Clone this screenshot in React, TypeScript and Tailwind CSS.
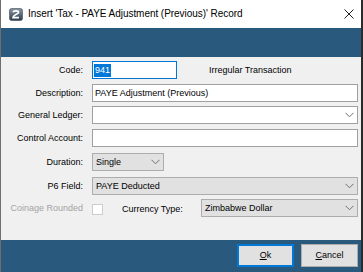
import React from "react";

const Chevron = () => (
  <svg width="9" height="6" viewBox="0 0 9 6" className="shrink-0">
    <path d="M0.5 0.8 L4.5 4.8 L8.5 0.8" fill="none" stroke="#707070" strokeWidth="1" />
  </svg>
);

const Label = ({ children, disabled }: { children: React.ReactNode; disabled?: boolean }) => (
  <div className={`w-[83px] shrink-0 text-right pr-[1px] ${disabled ? "text-[#a3a3a3]" : "text-black"}`}>{children}</div>
);

export default function App() {
  return (
    <div
      className="w-[363px] h-[272px] bg-[#2b2b2b] flex overflow-hidden text-[9px] leading-none"
      style={{ fontFamily: '"Liberation Sans", Arial, sans-serif' }}
    >
      <div className="w-[361px] h-full flex flex-col border-l border-[#6e6e6e]">
        {/* Title bar */}
        <div className="h-[28px] bg-white flex items-center shrink-0">
          <svg width="14" height="13" viewBox="0 0 14 13" className="ml-[8px]">
            <defs>
              <linearGradient id="ig" x1="0" y1="0" x2="0" y2="1">
                <stop offset="0" stopColor="#8a96a3" />
                <stop offset="1" stopColor="#2d3b4b" />
              </linearGradient>
            </defs>
            <rect x="0.5" y="0.5" width="13" height="12" rx="2" fill="url(#ig)" stroke="#3d4a58" strokeWidth="0.6" />
            <path d="M4 4.2 C4.5 2.6 9.5 2.4 9.5 4.4 C9.5 6.2 4.2 6.6 4 9.6 L10 9.6" fill="none" stroke="#ffffff" strokeWidth="1.7" />
          </svg>
          <span className="ml-[5px] text-[10px] text-black tracking-[-0.05px]">Insert 'Tax - PAYE Adjustment (Previous)' Record</span>
          <svg width="10" height="10" viewBox="0 0 10 10" className="ml-auto mr-[7px]">
            <path d="M0.5 0.5 L9.5 9.5 M9.5 0.5 L0.5 9.5" stroke="#222" strokeWidth="1" />
          </svg>
        </div>
        {/* Blue band */}
        <div className="h-[29px] bg-[#295a7e] shrink-0" />
        {/* Form */}
        <div className="h-[183px] bg-[#f0f0f0] shrink-0 flex flex-col pt-[4px] pr-[3px]">
          {/* Code */}
          <div className="flex items-center h-[18px]">
            <Label>Code:</Label>
            <div className="ml-[8px] w-[85px] h-full bg-white border border-[#0078d7] flex items-center pl-[1px]">
              <span className="bg-[#0078d7] text-white px-[1px] py-[2px]">941</span>
            </div>
            <div className="ml-[32px]">Irregular Transaction</div>
          </div>
          {/* Description */}
          <div className="flex items-center h-[18px] mt-[5px]">
            <Label>Description:</Label>
            <div className="ml-[8px] flex-1 h-full bg-white border border-[#a0a0a0] flex items-center pl-[2px]">
              PAYE Adjustment (Previous)
            </div>
          </div>
          {/* General Ledger */}
          <div className="flex items-center h-[18px] mt-[4px]">
            <Label>General Ledger:</Label>
            <div className="ml-[8px] flex-1 h-full bg-white border border-[#a0a0a0] flex items-center justify-end pr-[3px]">
              <Chevron />
            </div>
          </div>
          {/* Control Account */}
          <div className="flex items-center h-[18px] mt-[5px]">
            <Label>Control Account:</Label>
            <div className="ml-[8px] flex-1 h-full bg-white border border-[#a0a0a0]" />
          </div>
          {/* Duration */}
          <div className="flex items-center h-[18px] mt-[6px]">
            <Label>Duration:</Label>
            <div className="ml-[8px] w-[72px] h-full bg-[#e1e1e1] border border-[#adadad] flex items-center pl-[3px] pr-[3px]">
              <span>Single</span>
              <span className="ml-auto"><Chevron /></span>
            </div>
          </div>
          {/* P6 Field */}
          <div className="flex items-center h-[18px] mt-[6px]">
            <Label>P6 Field:</Label>
            <div className="ml-[8px] flex-1 h-full bg-[#e1e1e1] border border-[#adadad] flex items-center pl-[3px] pr-[3px]">
              <span>PAYE Deducted</span>
              <span className="ml-auto"><Chevron /></span>
            </div>
          </div>
          {/* Coinage / Currency */}
          <div className="flex items-center h-[18px] mt-[4px]">
            <Label disabled>Coinage Rounded</Label>
            <div className="ml-[8px] w-[11px] h-[11px] bg-white border border-[#cccccc] mt-[2px]" />
            <div className="ml-[19px] mt-[2px]">Currency Type:</div>
            <div className="ml-auto w-[157px] h-full bg-[#e1e1e1] border border-[#adadad] flex items-center pl-[3px] pr-[3px]">
              <span>Zimbabwe Dollar</span>
              <span className="ml-auto"><Chevron /></span>
            </div>
          </div>
        </div>
        {/* Bottom bar */}
        <div className="flex-1 bg-[#295a7e] flex items-start justify-end pt-[4px] pr-[3px] gap-[7px]">
          <button className="w-[57px] h-[23px] bg-[#e1e1e1] border-2 border-[#0078d7] flex items-center justify-center text-black">
            <span><span className="underline">O</span>k</span>
          </button>
          <button className="w-[57px] h-[23px] bg-[#e1e1e1] border border-[#adadad] flex items-center justify-center text-black">
            <span><span className="underline">C</span>ancel</span>
          </button>
        </div>
      </div>
    </div>
  );
}
